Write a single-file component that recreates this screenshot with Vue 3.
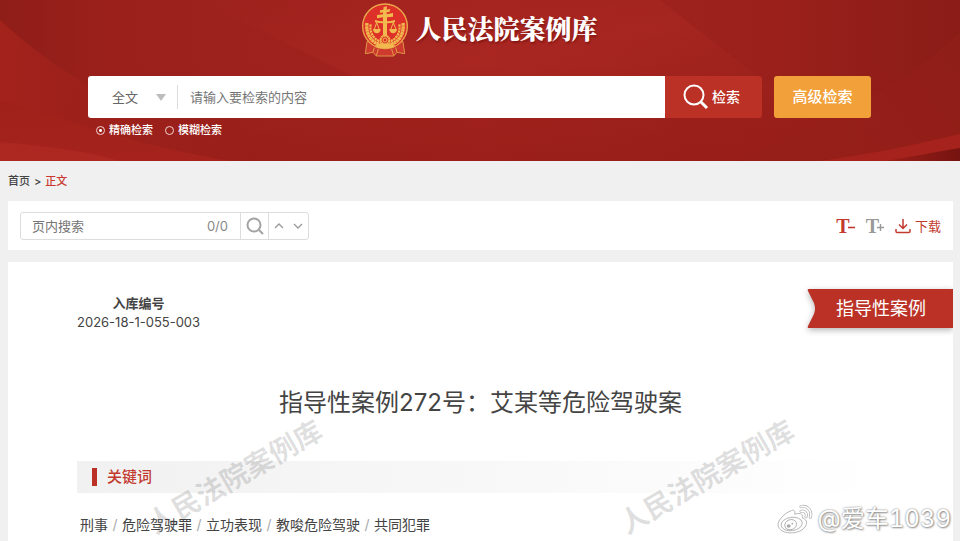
<script setup>
import { ref } from 'vue'

const scope = ref('全文')
const query = ref('')
const mode = ref('exact')
const pageQuery = ref('')
const keywords = ['刑事', '危险驾驶罪', '立功表现', '教唆危险驾驶', '共同犯罪']
</script>

<template>
  <div class="page">
    <header class="banner">
      <svg class="silk" viewBox="0 0 960 161" preserveAspectRatio="none" aria-hidden="true">
        <defs>
          <linearGradient id="base" x1="0" y1="0" x2="1" y2="0">
            <stop offset="0" stop-color="#8f1d18" />
            <stop offset="0.1" stop-color="#9a201b" />
            <stop offset="0.5" stop-color="#a4231f" />
            <stop offset="0.82" stop-color="#9a201b" />
            <stop offset="1" stop-color="#8a1c17" />
          </linearGradient>
          <linearGradient id="fold" x1="0" y1="0" x2="0" y2="1">
            <stop offset="0" stop-color="#9f201a" />
            <stop offset="1" stop-color="#a6231d" />
          </linearGradient>
          <linearGradient id="dark" x1="0" y1="0" x2="1" y2="0">
            <stop offset="0" stop-color="#9c1f19" />
            <stop offset="1" stop-color="#761310" />
          </linearGradient>
          <linearGradient id="side" x1="0" y1="0" x2="1" y2="0">
            <stop offset="0" stop-color="#a3221c" />
            <stop offset="1" stop-color="#9d201b" stop-opacity="0" />
          </linearGradient>
          <linearGradient id="beam" x1="0" y1="0" x2="1" y2="1">
            <stop offset="0" stop-color="#b02b25" stop-opacity="0" />
            <stop offset="0.5" stop-color="#b02b25" stop-opacity="0.4" />
            <stop offset="1" stop-color="#b02b25" stop-opacity="0" />
          </linearGradient>
          <linearGradient id="shade" x1="0" y1="0" x2="0" y2="1">
            <stop offset="0.4" stop-color="#961c17" stop-opacity="0" />
            <stop offset="1" stop-color="#961c17" stop-opacity="0.6" />
          </linearGradient>
        </defs>
        <rect width="960" height="161" fill="url(#base)" />
        <path d="M200 0H660L800 110H420Z" fill="url(#beam)" />
        <rect width="960" height="161" fill="url(#shade)" />
        <path d="M0 20C35 52 70 78 125 104L260 161H0Z" fill="url(#side)" />
        <path d="M960 32C930 60 900 84 840 112L740 161H960Z" fill="#96201a" opacity="0.5" />
        <path d="M0 100C60 116 120 142 230 161H0Z" fill="url(#fold)" />
        <path d="M0 142C50 146 90 152 120 161H0Z" fill="#b12b23" opacity="0.6" />
        <path d="M960 134C910 146 870 154 820 161H960Z" fill="#a5231c" />
        <path d="M960 148C930 153 910 157 885 161H960Z" fill="url(#dark)" />
      </svg>

      <div class="banner-body">
        <h1 class="brand">
          <svg class="emblem" viewBox="18 8 144 168" aria-hidden="true">
            <path d="M36 124L31 160L54 156L64 167H116L126 156L149 160L144 124Z" fill="#cf3a2e" stroke="#dd9548" stroke-width="3" />
            <path d="M54 156L58 142M126 156L122 142M64 166L70 146M116 166L110 146" stroke="#e39a49" stroke-width="3" fill="none" />
            <circle cx="90" cy="78" r="67" fill="#dd3028" stroke="#eba94b" stroke-width="4" />
            <g fill="none" stroke="#f2b94f">
              <path d="M36 68C32 102 48 126 78 134" stroke-width="10" stroke-dasharray="8 1" />
              <path d="M47 72C43 98 56 118 78 124" stroke-width="7" stroke-dasharray="7 2" />
              <path d="M144 68C148 102 132 126 102 134" stroke-width="10" stroke-dasharray="8 1" />
              <path d="M133 72C137 98 124 118 102 124" stroke-width="7" stroke-dasharray="7 2" />
              <path d="M65 67L57 90M65 67L74 90M115 67L106 90M115 67L124 90" stroke-width="3" />
            </g>
            <g fill="#f2b94f">
              <path d="M86 20L96 18L95 28L106 25L104 34L95 36V42L114 38V49L96 51V106H84V51L66 54V44L84 42V36L75 38V30L85 28Z" />
              <path d="M60 59C74 64 106 64 120 59V66C106 70 74 70 60 66Z" />
              <path d="M54 86H77C77 103 54 103 54 86Z" />
              <path d="M103 86H126C126 103 103 103 103 86Z" />
              <path d="M58 136C76 128 104 128 122 136L108 143H72Z" />
            </g>
            <circle cx="90" cy="119" r="13" fill="#dd3028" stroke="#f2b94f" stroke-width="6" stroke-dasharray="7 1" />
            <circle cx="90" cy="119" r="6" fill="none" stroke="#f2b94f" stroke-width="3" />
          </svg>
          <span class="brand-name">人民法院案例库</span>
        </h1>

        <form class="search" @submit.prevent>
          <div class="search-box">
            <div class="scope">
              <select v-model="scope" aria-label="检索范围">
                <option>全文</option>
              </select>
              <svg viewBox="0 0 10 7" width="10" height="7" aria-hidden="true"><path d="M0 0H10L5 7Z" fill="#bdbdbd" /></svg>
            </div>
            <input v-model="query" class="query" type="text" placeholder="请输入要检索的内容" aria-label="检索内容" />
          </div>
          <button class="go" type="submit">
            <svg viewBox="0 0 26 26" width="26" height="26" fill="none" stroke="#fff" stroke-width="2" aria-hidden="true">
              <circle cx="11" cy="11" r="9.5" /><path d="M18 18L24 24" stroke-width="3" />
            </svg>
            <span>检索</span>
          </button>
          <button class="advanced" type="button">高级检索</button>
        </form>

        <div class="modes">
          <label><input v-model="mode" type="radio" name="mode" value="exact" />精确检索</label>
          <label><input v-model="mode" type="radio" name="mode" value="fuzzy" />模糊检索</label>
        </div>
      </div>
    </header>

    <nav class="crumbs">
      <a href="#">首页</a><span>&gt;</span><a href="#" class="current">正文</a>
    </nav>

    <section class="toolbar">
      <div class="finder">
        <input v-model="pageQuery" type="text" placeholder="页内搜索" aria-label="页内搜索" />
        <span class="count">0/0</span>
        <button class="find" type="button" aria-label="搜索">
          <svg viewBox="0 0 18 18" width="18" height="18" fill="none" stroke="#a3a3a3" stroke-width="2" aria-hidden="true">
            <circle cx="8" cy="8" r="6.5" /><path d="M13 13L17 17" />
          </svg>
        </button>
        <div class="steps">
          <button type="button" aria-label="上一个">
            <svg viewBox="0 0 10 6" width="10" height="6" fill="none" stroke="#999" stroke-width="1.3" aria-hidden="true"><path d="M1 5L5 1L9 5" /></svg>
          </button>
          <button type="button" aria-label="下一个">
            <svg viewBox="0 0 10 6" width="10" height="6" fill="none" stroke="#999" stroke-width="1.3" aria-hidden="true"><path d="M1 1L5 5L9 1" /></svg>
          </button>
        </div>
      </div>
      <div class="actions">
        <button class="size" type="button" aria-label="缩小字号">
          <span>T</span>
          <svg viewBox="0 0 7 7" width="7" height="7" aria-hidden="true"><path d="M0 3.5H7" stroke="currentColor" stroke-width="1.6" /></svg>
        </button>
        <button class="size larger" type="button" aria-label="放大字号">
          <span>T</span>
          <svg viewBox="0 0 7 7" width="7" height="7" aria-hidden="true"><path d="M0 3.5H7M3.5 0V7" stroke="currentColor" stroke-width="1.4" /></svg>
        </button>
        <a class="download" href="#">
          <svg viewBox="0 0 16 16" width="16" height="16" fill="none" stroke="currentColor" stroke-width="1.5" aria-hidden="true">
            <path d="M8 1V10M4 6.5L8 10.5L12 6.5M1 11V13.5Q1 14.5 2 14.5H14Q15 14.5 15 13.5V11" />
          </svg>
          <span>下载</span>
        </a>
      </div>
    </section>

    <main class="case">
      <div class="case-top">
        <dl class="number">
          <dt>入库编号</dt>
          <dd>2026-18-1-055-003</dd>
        </dl>
        <div class="ribbon">
          <svg viewBox="0 0 146 39" preserveAspectRatio="none" aria-hidden="true">
            <path d="M146 0H2Q0 0 1 2L7 14Q9 19.500 7 25L1 37Q0 39 2 39H146Z" fill="#bb3126" />
          </svg>
          <span>指导性案例</span>
        </div>
      </div>
      <h2>指导性案例272号：艾某等危险驾驶案</h2>
      <h3>关键词</h3>
      <p class="keywords">
        <template v-for="(word, i) in keywords" :key="word">
          <i v-if="i">/</i><span>{{ word }}</span>
        </template>
      </p>
      <span class="mark mark-left">人民法院案例库</span>
      <span class="mark mark-right">人民法院案例库</span>
    </main>

    <div class="credit">
      <svg viewBox="0 0 108 90" width="36" height="30" aria-hidden="true">
        <g fill="#fff" stroke="#aaa" stroke-width="2.5">
          <path d="M43 20C50 16 56 21 53 31C64 26 80 27 76 42C88 45 92 55 86 66C76 84 46 91 23 84C2 77-1 61 8 48C17 34 31 24 43 20Z" />
          <ellipse cx="44" cy="60" rx="32" ry="20" transform="rotate(-8 44 60)" />
          <ellipse cx="41" cy="62" rx="18" ry="15" transform="rotate(-20 41 62)" />
        </g>
        <ellipse cx="35" cy="66" rx="6" ry="5" fill="#aaa" />
        <circle cx="46" cy="59" r="2.5" fill="#aaa" />
        <g fill="none" stroke-linecap="round">
          <path d="M72 8C91 3 106 20 100 40M72 22C82 19 91 27 87 38" stroke="#aaa" stroke-width="9" />
          <path d="M72 8C91 3 106 20 100 40M72 22C82 19 91 27 87 38" stroke="#fff" stroke-width="5" />
        </g>
      </svg>
      <span>@爱车1039</span>
    </div>
  </div>
</template>

<style>
html,
body {
  background: #f0f0f0;
}
body {
  overflow: hidden;
}
</style>

<style scoped>
.page {
  position: relative;
  height: 100vh;
  display: flex;
  flex-direction: column;
  overflow: hidden;
  font-family: Inter, "Noto Sans CJK SC", sans-serif;
  font-size: 13px;
  line-height: 18px;
  color: #444;
}
h1, h2, h3, p, dl, dd {
  margin: 0;
}
button, input, select {
  font: inherit;
  color: inherit;
  border: 0;
  padding: 0;
  margin: 0;
  background: none;
}
a {
  color: inherit;
  text-decoration: none;
}
svg {
  display: block;
  flex: none;
}

.banner {
  position: relative;
  flex: none;
}
.silk {
  position: absolute;
  width: 100%;
  height: 100%;
}
.banner-body {
  position: relative;
  padding: 3px 89px 22px 88px;
}
.brand {
  display: flex;
  justify-content: center;
  align-items: center;
  gap: 6px;
  color: #fff;
}
.emblem {
  width: 48px;
  height: 56px;
}
.brand-name {
  padding-bottom: 6px;
  font: 900 26px/36px "Noto Serif CJK SC", "Noto Sans CJK SC", serif;
  text-shadow: 1px 2px 2px rgba(80, 0, 0, 0.4);
}
.search {
  display: flex;
  height: 42px;
  margin-top: 17px;
}
.search-box {
  flex: 1;
  display: flex;
  align-items: center;
  background: #fff;
  border-radius: 3px 0 0 3px;
  color: #666;
}
.scope {
  display: grid;
  align-items: center;
  width: 90px;
  height: 24px;
  border-right: 1px solid #ddd;
  box-sizing: border-box;
}
.scope select,
.scope svg {
  grid-area: 1 / 1;
}
.scope select {
  appearance: none;
  padding-left: 24px;
  outline: 0;
}
.scope svg {
  justify-self: end;
  margin-right: 11px;
  pointer-events: none;
}
.query {
  flex: 1;
  min-width: 0;
  padding-left: 12px;
  outline: 0;
}
.query::placeholder {
  color: #757575;
}
.go,
.advanced {
  display: flex;
  align-items: center;
  justify-content: center;
  gap: 3px;
  width: 97px;
  color: #fff;
  font-weight: 500;
}
.go {
  padding-right: 4px;
  background: #bb3126;
  border-radius: 0 3px 3px 0;
  font-size: 14px;
}
.advanced {
  margin-left: 12px;
  background: #f2a03a;
  border-radius: 3px;
  font-size: 15px;
}
.modes {
  display: flex;
  gap: 12px;
  padding: 3px 0 0 8px;
  color: #fff;
  font-size: 11px;
  font-weight: 500;
}
.modes label {
  display: flex;
  align-items: center;
  gap: 4px;
}
.modes input {
  appearance: none;
  width: 9px;
  height: 9px;
  border: 1px solid #f3d5d2;
  border-radius: 50%;
}
.modes input:checked {
  background: radial-gradient(circle, #fff 0 1px, transparent 2px);
}

.crumbs {
  display: flex;
  gap: 4px;
  padding: 11px 8px;
  font-size: 11px;
  font-weight: 500;
}
.crumbs .current {
  color: #c8382e;
}

.toolbar {
  display: flex;
  justify-content: space-between;
  align-items: center;
  margin: 0 7px 12px 8px;
  padding: 11px 12px 10px;
  background: #fff;
}
.finder {
  display: flex;
  align-items: center;
  width: 289px;
  height: 28px;
  border: 1px solid #ddd;
  border-radius: 3px;
  box-sizing: border-box;
  color: #888;
}
.finder input {
  flex: 1;
  min-width: 0;
  padding-left: 11px;
  outline: 0;
}
.finder input::placeholder {
  color: #757575;
}
.count {
  padding-right: 12px;
}
.find,
.steps {
  align-self: stretch;
  display: flex;
  align-items: center;
  justify-content: center;
  border-left: 1px solid #ddd;
  box-sizing: border-box;
}
.find {
  width: 28px;
}
.steps {
  width: 40px;
  gap: 9px;
}
.actions {
  display: flex;
  align-items: center;
  gap: 11px;
  color: #c23a2f;
}
.size {
  display: flex;
  align-items: center;
}
.size span {
  font: bold 20px/20px "Liberation Serif", serif;
}
.size svg {
  margin: 3px 0 0 -2px;
}
.larger {
  color: #999;
}
.download {
  display: flex;
  align-items: center;
  gap: 4px;
}

.case {
  position: relative;
  flex: 1;
  margin: 0 7px 0 8px;
  padding-top: 27px;
  background: #fff;
  overflow: hidden;
}
.case-top {
  display: flex;
  justify-content: space-between;
  padding-left: 69px;
}
.number {
  padding-top: 5px;
  text-align: center;
}
.number dt {
  font-weight: 700;
}
.number dd {
  line-height: 20px;
}
.ribbon {
  display: grid;
  width: 146px;
  height: 39px;
  align-items: center;
  color: #fff;
  font-size: 18px;
}
.ribbon > * {
  grid-area: 1 / 1;
}
.ribbon svg {
  width: 100%;
  height: 39px;
  filter: drop-shadow(0 2px 3px rgba(0, 0, 0, 0.3));
}
.ribbon span {
  position: relative;
  padding-left: 29px;
}
h2 {
  margin-top: 53px;
  text-align: center;
  font-size: 24px;
  line-height: 36px;
  font-weight: 400;
}
h3 {
  display: flex;
  align-items: center;
  gap: 10px;
  height: 32px;
  margin: 40px 69px 0;
  padding-left: 15px;
  background: linear-gradient(90deg, #f1f1f1, #fff);
  color: #c23a2f;
  font-size: 15px;
  font-weight: 500;
}
h3::before {
  content: "";
  width: 5px;
  height: 18px;
  background: #bb3126;
}
.keywords {
  display: flex;
  margin: 23px 69px 0 72px;
  font-size: 14px;
}
.keywords i {
  width: 14px;
  text-align: center;
  font-style: normal;
  color: #aaa;
}
.mark {
  position: absolute;
  top: 215px;
  transform: translate(-50%, -50%) rotate(-30deg);
  font-size: 28px;
  line-height: 28px;
  font-weight: 700;
  white-space: nowrap;
  color: rgba(0, 0, 0, 0.13);
  pointer-events: none;
}
.mark-left {
  left: 24%;
}
.mark-right {
  left: 74%;
}

.credit {
  position: absolute;
  right: 9px;
  bottom: 6px;
  display: flex;
  align-items: center;
  gap: 5px;
  color: #fff;
  font-size: 24px;
  line-height: 32px;
  font-variant-numeric: tabular-nums;
  text-shadow: 0 0 2px #777, 1px 1px 2px #999;
}
</style>
